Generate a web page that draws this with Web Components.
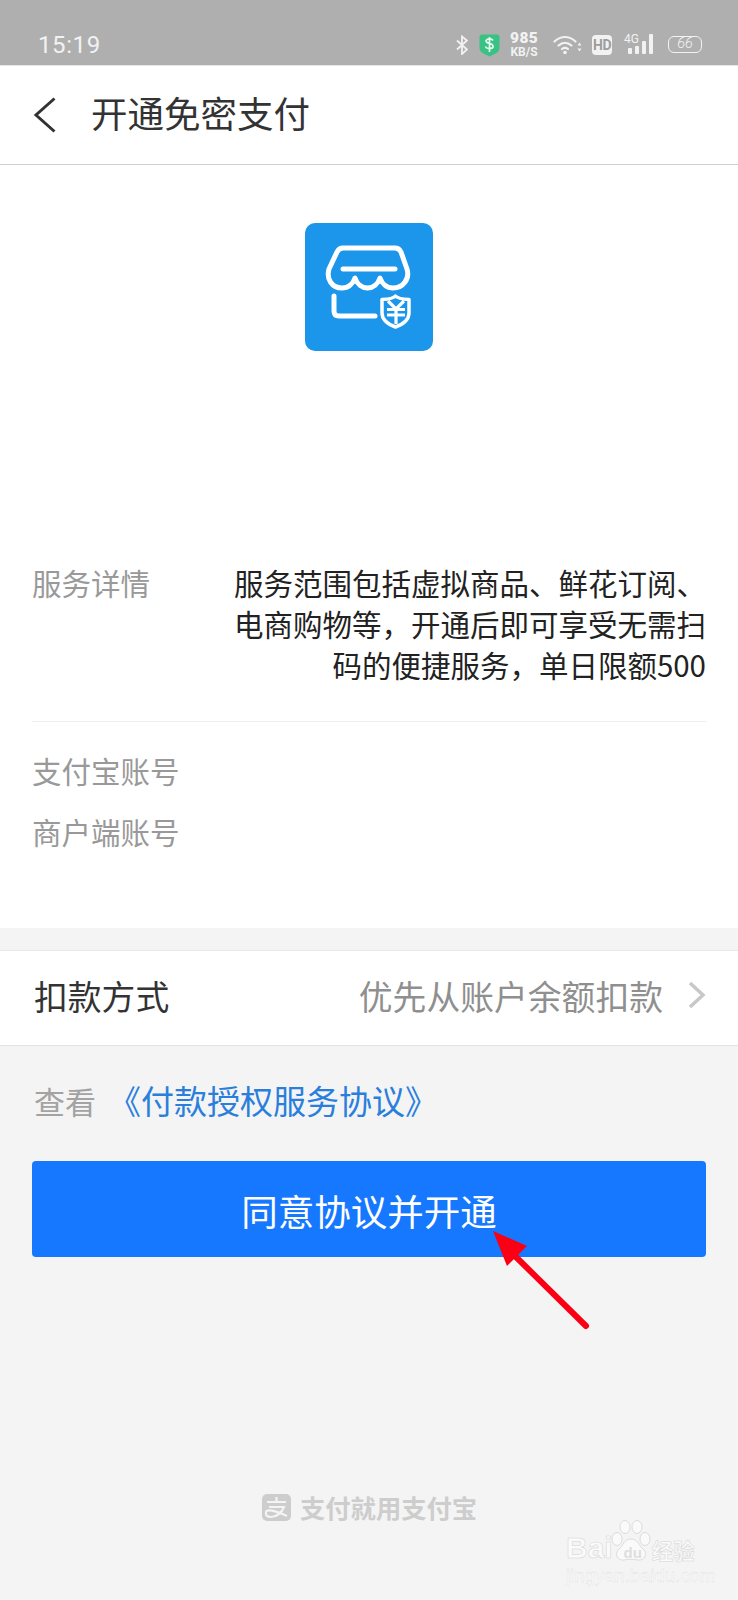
<!DOCTYPE html>
<html lang="zh">
<head>
<meta charset="utf-8">
<title>开通免密支付</title>
<style>
    html, body { margin: 0; padding: 0; }
    body {
        width: 738px;
        height: 1600px;
        position: relative;
        overflow: hidden;
        background: #f4f4f4;
        font-family: "Noto Sans CJK SC", "Noto Sans", sans-serif;
    }
</style>
</head>
<body>
<status-bar></status-bar>
<nav-bar>开通免密支付</nav-bar>
<service-card></service-card>
<pay-row label="扣款方式" value="优先从账户余额扣款"></pay-row>
<agreement-line prefix="查看" link="《付款授权服务协议》"></agreement-line>
<primary-button>同意协议并开通</primary-button>
<brand-footer></brand-footer>
<tip-arrow></tip-arrow>
<baidu-mark></baidu-mark>

<script>
class StatusBar extends HTMLElement {
    constructor() {
        super();
        this.attachShadow({ mode: 'open' });
    }
    connectedCallback() {
        this.shadowRoot.innerHTML = `
            <style>
                :host {
                    display: flex;
                    align-items: center;
                    height: 40px;
                    padding: 25px 0 0 38px;
                    background: #afafaf;
                    color: #f2f2f2;
                    font-family: Roboto, "Liberation Sans", sans-serif;
                    border-bottom: 1px solid #e6e6e6;
                }
                .time { font-size: 24px; letter-spacing: 0.6px; line-height: 40px; }
                .icons { margin-left: auto; display: flex; align-items: center; padding-right: 36px; height: 40px; margin-top: -1px; }
                svg { display: block; }
                .speed { width: 28px; margin: 0 15px 0 10px; text-align: center; font-weight: 700; line-height: 1; }
                .speed b { display: block; font-size: 15.5px; letter-spacing: 0.4px; }
                .speed i { display: block; font-style: normal; font-size: 12px; margin-top: 0; white-space: nowrap; }
                .hd {
                    width: 20px; height: 20px; margin: 0 12px 0 10px; border-radius: 4px;
                    background: #f2f2f2; color: #9d9d9d; font-size: 14px; font-weight: 700; letter-spacing: -0.5px;
                    display: flex; align-items: center; justify-content: center;
                }
                .net { position: relative; width: 29px; height: 24px; margin-right: 15px; }
                .net span { position: absolute; left: 0; top: 0; font-size: 12px; line-height: 12px; }
                .net svg { position: absolute; left: 0; top: 0; }
                .battery {
                    width: 34px; height: 17px; box-sizing: border-box; border: 1.5px solid #f2f2f2;
                    border-radius: 6px; font-size: 14.5px; line-height: 14px; text-align: center; font-weight: 300; font-style: italic;
                }
            </style>
            <span class="time">15:19</span>
            <div class="icons">
                <svg width="12" height="20" viewBox="0 0 12 20" fill="none" stroke="#f2f2f2" stroke-width="1.8">
                    <path d="M1 5.5l10 9-5 4.500V1.500l5 4-10 9"/>
                </svg>
                <svg width="21" height="24" viewBox="0 0 21 24" style="margin-left:11px">
                    <path d="M3 1.500h15q2.500 0 2.500 2.500v11q0 3-3 5l-7 3.500-7-3.500q-3-2-3-5V4q0-2.500 2.500-2.500z" fill="#38c283"/>
                    <path d="M14 7.500q-1-1.700-3.500-1.700t-3.500 1.800q0 2.200 3.500 2.900t3.600 3q0 2-3.600 2t-3.800-2M10.500 4v15" fill="none" stroke="#e9f8f0" stroke-width="1.700"/>
                </svg>
                <div class="speed"><b>985</b><i>KB/S</i></div>
                <svg width="29" height="20" viewBox="0 0 29 20" fill="none" stroke="#f2f2f2" stroke-width="2.200" stroke-linecap="round">
                    <path d="M1.500 6.500C8 .5 16 .5 22.500 6.500"/>
                    <path d="M5.500 10.500c4-3.500 9-3.500 13 0"/>
                    <path d="M9 14c2-1.600 4-1.600 6 0"/>
                    <circle cx="12" cy="17.500" r="1.800" fill="#f2f2f2" stroke="none"/>
                    <path d="M24.500 10.500h4l-2-3zM24.500 13.500h4l-2 3z" fill="#f2f2f2" stroke="none"/>
                </svg>
                <div class="hd">HD</div>
                <div class="net">
                    <span>4G</span>
                    <svg width="29" height="24" viewBox="0 0 29 24" fill="#f2f2f2">
                        <rect x="4" y="15" width="4" height="6" rx="1"/>
                        <rect x="11" y="13" width="4" height="8" rx="1"/>
                        <rect x="18" y="8" width="4" height="13" rx="1"/>
                        <rect x="25" y="1" width="4" height="20" rx="1"/>
                    </svg>
                </div>
                <div class="battery">66</div>
            </div>
        `;
    }
}

class NavBar extends HTMLElement {
    constructor() {
        super();
        this.attachShadow({ mode: 'open' });
    }
    connectedCallback() {
        this.shadowRoot.innerHTML = `
            <style>
                :host {
                    display: flex;
                    align-items: center;
                    height: 98px;
                    background: #fff;
                    border-bottom: 1px solid #cfcfcf;
                    color: #333;
                }
                svg { display: block; margin-left: 33px; }
                .title { margin: -4px 0 0 35px; font-size: 36.500px; line-height: 48px; }
            </style>
            <svg width="23" height="36" viewBox="0 0 23 36" fill="none" stroke="#333" stroke-width="3">
                <path d="M21.500 1.500L3 18l18.500 16.500"/>
            </svg>
            <span class="title"><slot></slot></span>
        `;
    }
}

class ServiceCard extends HTMLElement {
    constructor() {
        super();
        this.attachShadow({ mode: 'open' });
    }
    connectedCallback() {
        this.shadowRoot.innerHTML = `
            <style>
                :host {
                    display: block;
                    background: #fff;
                    padding: 58px 32px 66px;
                    font-size: 29.500px;
                }
                .logo {
                    display: block;
                    width: 128px;
                    height: 128px;
                    margin: 0 auto 211px;
                    border-radius: 10px;
                    background: #1b96ea;
                }
                .detail { display: flex; line-height: 41px; padding-bottom: 36px; border-bottom: 1px solid #ededed; }
                .label { color: #999; white-space: nowrap; }
                .value { flex: 1; text-align: right; color: #222; white-space: nowrap; }
                .accounts { padding-top: 18px; color: #999; line-height: 61px; }
            </style>
            <svg class="logo" viewBox="0 0 128 128" fill="none" stroke="#fff" stroke-width="5" stroke-linecap="round" stroke-linejoin="round">
                <path d="M38 25H90Q94 25 96 29L102 46C105 56 98 65 88 65C82 65 77 61 75 55C73 61 68 65 62.500 65C57 65 52 61 50 55C48 61 43 65 37 65C27 65 21 56 24 46L32 29Q34 25 38 25Z"/>
                <path d="M38 46H90"/>
                <path d="M29 73V88Q29 93 34 93H70"/>
                <path d="M77 76.500Q88 76 90.500 73Q93 76 104 76.500V90Q104 99 90.500 104Q77 99 77 90Z" stroke-width="3.500"/>
                <path d="M83 78L91 86L99 78M82 86.500H100M82 92H100M91 86V101" stroke-width="3.200" stroke-linecap="butt" stroke-linejoin="miter"/>
            </svg>
            <div class="detail">
                <span class="label">服务详情</span>
                <div class="value">服务范围包括虚拟商品、鲜花订阅、<br>电商购物等，开通后即可享受无需扫<br>码的便捷服务，单日限额500</div>
            </div>
            <div class="accounts">
                <div>支付宝账号</div>
                <div>商户端账号</div>
            </div>
        `;
    }
}

class PayRow extends HTMLElement {
    constructor() {
        super();
        this.attachShadow({ mode: 'open' });
    }
    connectedCallback() {
        this.shadowRoot.innerHTML = `
            <style>
                :host {
                    display: flex;
                    align-items: center;
                    height: 88px;
                    margin-top: 22px;
                    padding: 0 32px 6px 34px;
                    background: #fff;
                    border-top: 1px solid #e8e8e8;
                    border-bottom: 1px solid #e3e3e3;
                    font-size: 33.800px;
                }
                .label { color: #333; }
                .value { margin-left: auto; color: #8f8f8f; }
                svg { display: block; margin-left: 25px; }
            </style>
            <span class="label">${this.getAttribute('label')}</span>
            <span class="value">${this.getAttribute('value')}</span>
            <svg width="18" height="28" viewBox="0 0 18 28" fill="none" stroke="#c8c8c8" stroke-width="3.500">
                <path d="M2 2l13 12L2 26"/>
            </svg>
        `;
    }
}

class AgreementLine extends HTMLElement {
    constructor() {
        super();
        this.attachShadow({ mode: 'open' });
    }
    connectedCallback() {
        this.shadowRoot.innerHTML = `
            <style>
                :host {
                    display: flex;
                    align-items: center;
                    height: 40px;
                    padding: 34px 34px 0;
                    white-space: nowrap;
                }
                .prefix { color: #a3a3a3; font-size: 31px; }
                .link { color: #2a7fdc; font-size: 33px; margin-left: 12px; }
            </style>
            <span class="prefix">${this.getAttribute('prefix')}</span><span class="link">${this.getAttribute('link')}</span>
        `;
    }
}

class PrimaryButton extends HTMLElement {
    constructor() {
        super();
        this.attachShadow({ mode: 'open' });
    }
    connectedCallback() {
        this.shadowRoot.innerHTML = `
            <style>
                :host {
                    display: flex;
                    align-items: center;
                    justify-content: center;
                    height: 94px;
                    padding-top: 2px;
                    margin: 41px 32px 0;
                    border-radius: 4px;
                    background: #1677ff;
                    color: #fff;
                    font-size: 36.500px;
                }
            </style>
            <slot></slot>
        `;
    }
}

class BrandFooter extends HTMLElement {
    constructor() {
        super();
        this.attachShadow({ mode: 'open' });
    }
    connectedCallback() {
        this.shadowRoot.innerHTML = `
            <style>
                :host {
                    display: flex;
                    align-items: center;
                    margin-top: 236px;
                    padding-left: 262px;
                    height: 28px;
                    color: #cdcdcd;
                    font-size: 25.300px;
                    font-weight: 700;
                    white-space: nowrap;
                }
                svg { display: block; margin-right: 9px; }
            </style>
            <svg width="29" height="27" viewBox="0 0 29 27">
                <rect width="29" height="27" rx="5" fill="#cdcdcd"/>
                <path d="M5 8H24M14.500 3V8M7 13H22C20 19 14 23 9 23C5 23 3 21 4 18C5 15 12 16 25 22" fill="none" stroke="#f4f4f4" stroke-width="2.200"/>
            </svg>
            <span>支付就用支付宝</span>
        `;
    }
}

class TipArrow extends HTMLElement {
    constructor() {
        super();
        this.attachShadow({ mode: 'open' });
    }
    connectedCallback() {
        this.shadowRoot.innerHTML = `
            <style>
                :host { position: absolute; left: 485px; top: 1225px; display: block; }
                svg { display: block; }
            </style>
            <svg width="110" height="110" viewBox="485 1225 110 110">
                <path d="M493 1231L527 1246L507 1266Z" fill="#fb0014"/>
                <path d="M515 1256L586 1326" stroke="#fb0014" stroke-width="6" stroke-linecap="round"/>
            </svg>
        `;
    }
}

class BaiduMark extends HTMLElement {
    constructor() {
        super();
        this.attachShadow({ mode: 'open' });
    }
    connectedCallback() {
        this.shadowRoot.innerHTML = `
            <style>
                :host {
                    position: absolute;
                    left: 566px;
                    top: 1519px;
                    width: 135px;
                    display: block;
                    color: #fafafa;
                    font-family: "Liberation Sans", "Noto Sans CJK SC", sans-serif;
                    -webkit-text-stroke: 0.5px #d4d4d4;
                }
                .brand { display: flex; align-items: flex-end; height: 44px; font-size: 30px; font-weight: 700; line-height: 30px; }
                .du { position: relative; width: 26px; margin-left: 7px; text-align: center; font-size: 15px; line-height: 20px; color: #dedede; -webkit-text-stroke: 0; }
                svg { position: absolute; left: 42px; top: 0; }
                .cn { font-size: 21.500px; line-height: 26px; margin-left: 6px; white-space: nowrap; font-family: "Noto Sans CJK SC", sans-serif; }
                .url { font-size: 18.500px; line-height: 20px; margin-top: 3px; white-space: nowrap; font-weight: 400; -webkit-text-stroke: 0.3px #dcdcdc; }
            </style>
            <svg width="44" height="44" viewBox="0 0 44 44" fill="#fafafa" stroke="#d4d4d4" stroke-width=".8">
                <ellipse cx="9" cy="20" rx="5" ry="6.500"/>
                <ellipse cx="17" cy="8" rx="5" ry="6.500"/>
                <ellipse cx="29" cy="8" rx="5" ry="6.500"/>
                <ellipse cx="37" cy="20" rx="5" ry="6.500"/>
                <path d="M23 20C16 20 15 27 11 30C6 34 9 42 16 41C20 40 26 40 30 41C37 42 40 34 35 30C31 27 30 20 23 20Z"/>
            </svg>
            <div class="brand"><span>Bai</span><span class="du">du</span><span class="cn">经验</span></div>
            <div class="url">jingyan.baidu.com</div>
        `;
    }
}

customElements.define('status-bar', StatusBar);
customElements.define('nav-bar', NavBar);
customElements.define('service-card', ServiceCard);
customElements.define('pay-row', PayRow);
customElements.define('agreement-line', AgreementLine);
customElements.define('primary-button', PrimaryButton);
customElements.define('brand-footer', BrandFooter);
customElements.define('tip-arrow', TipArrow);
customElements.define('baidu-mark', BaiduMark);
</script>
</body>
</html>
